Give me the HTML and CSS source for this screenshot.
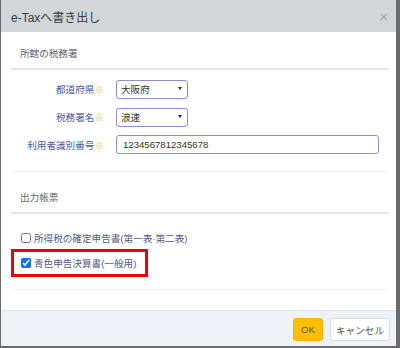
FILE: index.html
```html
<!DOCTYPE html>
<html>
<head>
  <meta charset="utf-8">
  <link rel="stylesheet" href="styles.css">
</head>
<body>
  <div class="dialog">
    <div class="dialog-header">
      <h1>e-Taxへ書き出し</h1>
      <span class="close">&times;</span>
    </div>

    <div class="dialog-body">
      <div class="panel">
        <h3>所轄の税務署</h3>
        <div class="form-grid">
          <label>都道府県<span class="req">※</span></label>
          <div class="select-wrap">
            <select class="field field-select">
              <option>大阪府</option>
            </select>
          </div>

          <label>税務署名<span class="req">※</span></label>
          <div class="select-wrap">
            <select class="field field-select">
              <option>浪速</option>
            </select>
          </div>

          <label>利用者識別番号<span class="req">※</span></label>
          <input class="field field-text" type="text" value="1234567812345678">
        </div>
      </div>

      <div class="panel">
        <h3>出力帳票</h3>
        <div class="check-list">
          <label class="check-row">
            <input type="checkbox">
            <span>所得税の確定申告書(第一表·第二表)</span>
          </label>
          <label class="check-row highlighted">
            <input type="checkbox" checked>
            <span>青色申告決算書(一般用)</span>
          </label>
        </div>
      </div>
    </div>

    <div class="dialog-footer">
      <button class="btn btn-ok">OK</button>
      <button class="btn btn-cancel">キャンセル</button>
    </div>
  </div>
</body>
</html>
```

FILE: styles.css
```css
body {
  margin: 0;
  background: #6b6b6b;
  font-family: "Liberation Sans", "Noto Sans CJK JP", sans-serif;
  color: #555;
}

.dialog {
  width: 395px;
  height: 346px;
  margin-left: 1px;
  background: white;
  display: flex;
  flex-direction: column;
}

.dialog-header {
  height: 32px;
  padding: 0 8px 0 10px;
  background: #d3d6d9;
  display: flex;
  align-items: center;
  justify-content: space-between;
}

.dialog-header h1 {
  margin: 0;
  font-size: 12px;
  font-weight: 400;
  color: #3a3a3a;
}

.close {
  font-size: 15px;
  line-height: 15px;
  color: #a3a3a3;
}

.dialog-body {
  flex: 1;
  padding: 0 7px 0 10px;
  display: flex;
  flex-direction: column;
  gap: 4px;
}

.panel {
  border-bottom: 1px solid #f1f1f1;
}

.panel h3 {
  margin: 0;
  padding: 13px 9px 6px;
  font-size: 9.6px;
  line-height: 17px;
  font-weight: 400;
  color: #666;
  border-bottom: 2px solid #e6e6e6;
}

.form-grid {
  display: grid;
  grid-template-columns: 93px auto;
  column-gap: 12px;
  row-gap: 8px;
  padding: 9px 0 17px;
  align-items: center;
}

.form-grid label {
  font-size: 9.6px;
  color: #4f5b9b;
  text-align: right;
}

.req {
  color: #f2c14e;
}

.field {
  height: 19px;
  box-sizing: border-box;
  border: 1px solid #8c90c8;
  border-radius: 3px;
  background: white;
  font-family: "Liberation Sans", "Noto Sans CJK JP", sans-serif;
  font-size: 9.6px;
  color: #333;
  margin: 0;
  outline: none;
}

.select-wrap {
  position: relative;
  width: 72px;
}

.select-wrap::after {
  content: "";
  position: absolute;
  right: 6px;
  top: 8px;
  border-left: 2.5px solid transparent;
  border-right: 2.5px solid transparent;
  border-top: 3px solid #1f2d5c;
}

.field-select {
  width: 72px;
  padding: 0 0 0 4px;
  appearance: none;
  -webkit-appearance: none;
}

.field-text {
  width: 263px;
  padding: 0 6px;
}

.check-list {
  display: flex;
  flex-direction: column;
  align-items: flex-start;
  gap: 3px;
  padding: 13px 0 15px;
}

.check-row {
  height: 22px;
  box-sizing: border-box;
  padding: 0 9px 0 7px;
  margin-left: 3px;
  display: flex;
  align-items: center;
  gap: 3px;
  font-size: 9.6px;
  color: #535c85;
}

.check-row input {
  width: 10px;
  height: 10px;
  margin: 0;
}

.check-row.highlighted {
  outline: 3px solid #e8000b;
}

.dialog-footer {
  height: 28px;
  border-top: 1px solid #dfe3e7;
  background: #eef1f5;
  padding: 7px 6px 0;
  display: flex;
  justify-content: flex-end;
  align-items: flex-start;
  gap: 7px;
}

.btn {
  height: 23px;
  border-radius: 3px;
  font-family: "Liberation Sans", "Noto Sans CJK JP", sans-serif;
  font-size: 9.6px;
  color: #555;
  padding: 0;
  cursor: pointer;
}

.btn-ok {
  width: 30px;
  background: #ffbf00;
  border: 1px solid #f3b300;
}

.btn-cancel {
  width: 60px;
  background: white;
  border: 1px solid #d8dbe0;
}
```
